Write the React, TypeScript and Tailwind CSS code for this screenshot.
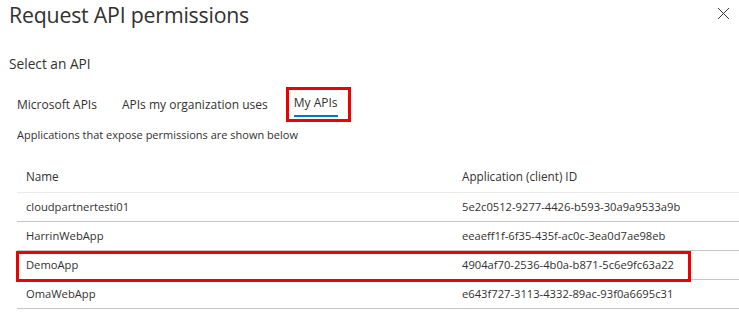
import { X } from "lucide-react";

const apps = [
  { name: "cloudpartnertesti01", id: "5e2c0512-9277-4426-b593-30a9a9533a9b" },
  { name: "HarrinWebApp", id: "eeaeff1f-6f35-435f-ac0c-3ea0d7ae98eb" },
  { name: "DemoApp", id: "4904af70-2536-4b0a-b871-5c6e9fc63a22", marked: true },
  { name: "OmaWebApp", id: "e643f727-3113-4332-89ac-93f0a6695c31" },
];

export default function App() {
  return (
    <div className="h-[332px] w-[739px] overflow-hidden bg-white text-[#323130]" style={{ fontFamily: '"Open Sans", "Noto Sans", sans-serif' }}>
      <div className="flex items-start justify-between pl-[9px]">
        <h1 className="mt-[1px] text-[21.3px] font-normal leading-[28px] tracking-[-0.2px]">Request API permissions</h1>
        <button className="mr-[5px] mt-[3px] text-[#323130]">
          <X size={21} strokeWidth={1.1} />
        </button>
      </div>

      <div className="mt-[26px] pl-[9px] text-[13.7px] leading-[18px]">Select an API</div>

      <div className="mt-[14px] flex items-center pl-[17px] text-[12px]">
        <span className="mr-[25px]">Microsoft APIs</span>
        <span className="mr-[18px]">APIs my organization uses</span>
        <div className="flex h-[35px] flex-col items-start border-[3px] border-[#ee0000] pl-[5px] pr-[10px] pt-[4px]">
          <span className="leading-[18px]">My APIs</span>
          <span className="mt-[3px] h-[2px] w-full bg-[#0078d4]" />
        </div>
      </div>

      <div className="mt-[5px] pl-[17px] text-[11px] leading-[16px]">Applications that expose permissions are shown below</div>

      <div className="ml-[17px] mt-[22px] text-[11.2px]">
        <div className="flex h-[28px] items-start border-b border-[#edebe9] pt-[3px] text-[11.7px]">
          <div className="w-[436px] pl-[9px]">Name</div>
          <div className="pl-[9px]">Application (client) ID</div>
        </div>
        {apps.map((a) => (
          <div key={a.id} className="relative flex h-[29px] items-center border-b border-[#c8c6c4]">
            <div className="w-[436px] pl-[9px]">{a.name}</div>
            <div className="pl-[9px]">{a.id}</div>
            {a.marked && <span className="absolute left-[-1px] top-[0px] h-[31px] w-[675px] border-[3px] border-[#ee0000]" />}
          </div>
        ))}
      </div>
    </div>
  );
}
